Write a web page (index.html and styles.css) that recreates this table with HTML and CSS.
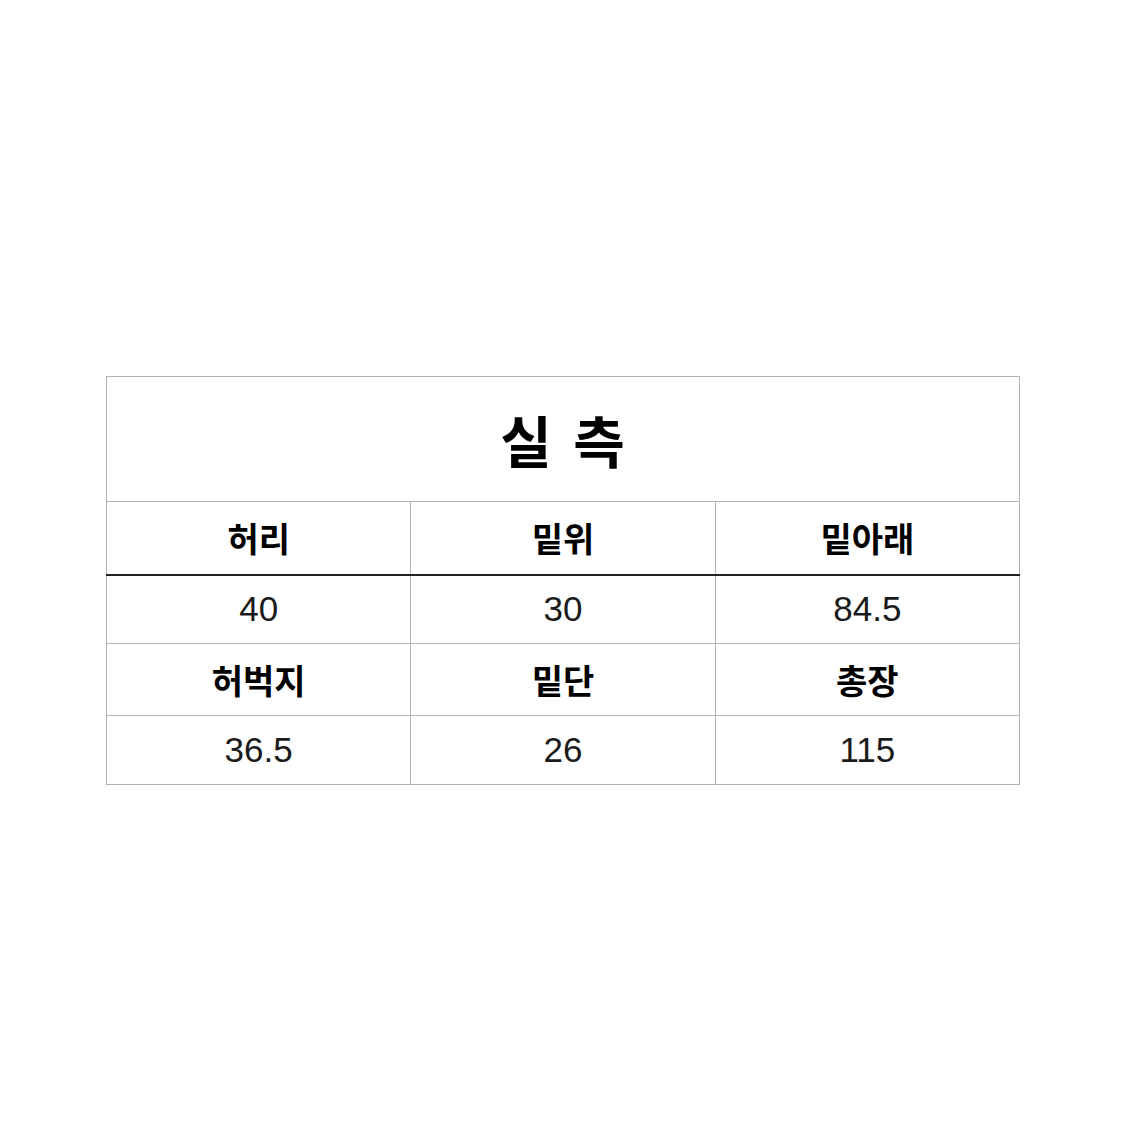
FILE: index.html
```html
<!DOCTYPE html>
<html lang="ko">
<head>
<meta charset="utf-8">
<link rel="stylesheet" href="styles.css">
</head>
<body>
<div class="page">
  <table class="size-table">
    <tr class="title-row"><th colspan="3">실 측</th></tr>
    <tr class="head-row head-first"><th>허리</th><th>밑위</th><th>밑아래</th></tr>
    <tr class="val-row val-first"><td>40</td><td>30</td><td>84.5</td></tr>
    <tr class="head-row head-second"><th>허벅지</th><th>밑단</th><th>총장</th></tr>
    <tr class="val-row val-second"><td>36.5</td><td>26</td><td>115</td></tr>
  </table>
</div>
</body>
</html>
```
FILE: styles.css
```css
html, body {
  margin: 0;
  padding: 0;
  background: #ffffff;
}
.page {
  width: 1125px;
  height: 1125px;
  display: flex;
  justify-content: flex-start;
  align-items: flex-start;
  padding: 376px 0 0 106px;
  box-sizing: border-box;
}
.size-table {
  width: 914px;
  border-collapse: collapse;
  table-layout: fixed;
  font-family: "Liberation Sans", "Noto Sans CJK KR", sans-serif;
  color: #111;
}
.size-table th,
.size-table td {
  border: 1px solid #b3b3b3;
  text-align: center;
  vertical-align: middle;
  padding: 0;
  line-height: 1.1;
}
.title-row th {
  height: 124px;
  font-family: "Noto Sans CJK KR", sans-serif;
  font-weight: 700;
  font-size: 56px;
  letter-spacing: 1px;
  word-spacing: 4px;
  color: #000;
}
.head-row th {
  font-family: "Noto Sans CJK KR", sans-serif;
  font-weight: 700;
  font-size: 34px;
  color: #000;
}
.head-first th {
  height: 72px;
  border-bottom: 2px solid #222;
}
.head-second th {
  height: 71px;
}
.val-row td {
  font-size: 35px;
  font-weight: 400;
  color: #1a1a1a;
}
.val-first td {
  height: 67px;
}
.val-second td {
  height: 68px;
}
```
